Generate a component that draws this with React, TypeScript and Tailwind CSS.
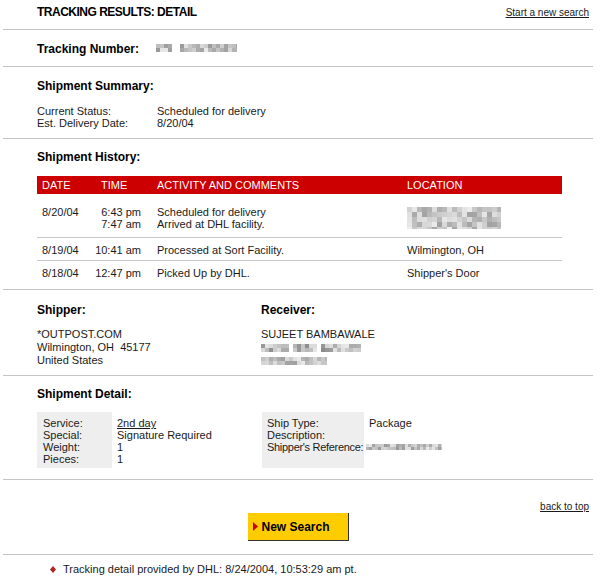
import React from "react";

function rng(seed: number) {
  let s = seed;
  return () => {
    s = (s * 9301 + 49297) % 233280;
    return s / 233280;
  };
}

function Blur({
  w,
  h,
  cell = 4,
  seed = 1,
  gaps = [],
  lo = 150,
  hi = 235,
}: {
  w: number;
  h: number;
  cell?: number;
  seed?: number;
  gaps?: [number, number][];
  lo?: number;
  hi?: number;
}) {
  const r = rng(seed);
  const rects: React.ReactNode[] = [];
  for (let y = 0; y < h; y += cell) {
    for (let x = 0; x < w; x += cell) {
      const v = Math.floor(lo + r() * (hi - lo));
      if (gaps.some(([a, b]) => x >= a && x < b)) continue;
      rects.push(
        <rect
          key={`${x}-${y}`}
          x={x}
          y={y}
          width={cell}
          height={cell}
          fill={`rgb(${v},${v},${v})`}
        />
      );
    }
  }
  return (
    <svg width={w} height={h} className="block">
      {rects}
    </svg>
  );
}

const sectionCls = "border-b border-[#c4c4c4] pl-[34px]";
const headCls = "text-[12px] leading-[14px] font-bold text-black";

export default function App() {
  return (
    <div className="w-[614px] min-h-[581px] bg-white font-['Liberation_Sans',Arial,sans-serif] text-[#1a1a1a]">
      <div className="ml-[3px] w-[590px]">
        {/* Header */}
        <div className={`${sectionCls} flex items-baseline justify-between pr-[4px] pt-[5px] pb-[10px]`}>
          <h1 className={`${headCls} tracking-[-0.5px]`}>TRACKING RESULTS: DETAIL</h1>
          <a href="#" className="text-[10px] leading-[12px] underline text-[#1a1a1a]">
            Start a new search
          </a>
        </div>

        {/* Tracking number */}
        <div className={`${sectionCls} flex items-start pt-[12px] pb-[10px]`}>
          <div className={`${headCls} w-[119px]`}>Tracking Number:</div>
          <div className="pt-[2px]">
            <Blur w={81} h={8} seed={7} gaps={[[16, 24]]} />
          </div>
        </div>

        {/* Summary */}
        <div className={`${sectionCls} pt-[12px] pb-[9px]`}>
          <div className={headCls}>Shipment Summary:</div>
          <div className="mt-[12px] grid grid-cols-[120px_1fr] text-[11px] leading-[12px]">
            <div>Current Status:</div>
            <div>Scheduled for delivery</div>
            <div>Est. Delivery Date:</div>
            <div>8/20/04</div>
          </div>
        </div>

        {/* History */}
        <div className={`${sectionCls} pt-[11px]`}>
          <div className={headCls}>Shipment History:</div>
          <div className="mt-[12px] w-[525px] text-[11px] leading-[12px]">
            <div className="grid h-[18px] grid-cols-[58px_62px_250px_1fr] bg-[#cc0000] leading-[18px] text-white">
              <div className="pl-[5px]">DATE</div>
              <div className="pl-[6px]">TIME</div>
              <div>ACTIVITY AND COMMENTS</div>
              <div>LOCATION</div>
            </div>
            <div className="grid grid-cols-[58px_62px_250px_1fr] border-b border-[#c8c8c8] pt-[12px] pb-[7px]">
              <div className="pl-[5px]">8/20/04</div>
              <div className="pr-[16px] text-right">
                <div>6:43 pm</div>
                <div>7:47 am</div>
              </div>
              <div>
                <div>Scheduled for delivery</div>
                <div>Arrived at DHL facility.</div>
              </div>
              <div className="pt-[1px]">
                <Blur w={94} h={22} cell={5} seed={11} lo={160} hi={240} />
              </div>
            </div>
            <div className="grid grid-cols-[58px_62px_250px_1fr] border-b border-[#c8c8c8] pt-[6px] pb-[4px]">
              <div className="pl-[5px]">8/19/04</div>
              <div className="pr-[16px] text-right">10:41 am</div>
              <div>Processed at Sort Facility.</div>
              <div>Wilmington, OH</div>
            </div>
            <div className="grid grid-cols-[58px_62px_250px_1fr] pt-[6px] pb-[10px]">
              <div className="pl-[5px]">8/18/04</div>
              <div className="pr-[16px] text-right">12:47 pm</div>
              <div>Picked Up by DHL.</div>
              <div>Shipper's Door</div>
            </div>
          </div>
        </div>

        {/* Shipper / Receiver */}
        <div className={`${sectionCls} grid grid-cols-[224px_1fr] pt-[13px] pb-[8px]`}>
          <div>
            <div className={headCls}>Shipper:</div>
            <div className="mt-[11px] text-[11px] leading-[13px]">
              <div>*OUTPOST.COM</div>
              <div>Wilmington, OH&nbsp; 45177</div>
              <div>United States</div>
            </div>
          </div>
          <div>
            <div className={headCls}>Receiver:</div>
            <div className="mt-[11px] text-[11px] leading-[13px]">
              <div>SUJEET BAMBAWALE</div>
              <div className="flex h-[13px] items-center">
                <Blur w={100} h={8} seed={23} gaps={[[28, 32], [56, 60]]} lo={140} hi={235} />
              </div>
              <div className="flex h-[13px] items-center">
                <Blur w={66} h={8} seed={31} lo={160} hi={235} />
              </div>
            </div>
          </div>
        </div>

        {/* Shipment detail */}
        <div className={`${sectionCls} pt-[11px] pb-[11px]`}>
          <div className={headCls}>Shipment Detail:</div>
          <div className="mt-[11px] flex text-[11px] leading-[12px]">
            <div className="w-[75px] bg-[#eeeeee] pl-[6px] pt-[5px] pb-[3px]">
              <div>Service:</div>
              <div>Special:</div>
              <div>Weight:</div>
              <div>Pieces:</div>
            </div>
            <div className="w-[150px] pl-[5px] pt-[5px] pb-[3px]">
              <div>
                <a href="#" className="underline">2nd day</a>
              </div>
              <div>Signature Required</div>
              <div>1</div>
              <div>1</div>
            </div>
            <div className="w-[102px] bg-[#eeeeee] pl-[5px] pt-[5px] pb-[3px] whitespace-nowrap">
              <div>Ship Type:</div>
              <div>Description:</div>
              <div className="tracking-[-0.3px]">Shipper's Reference:</div>
            </div>
            <div className="pl-[2px] pt-[5px] pb-[3px]">
              <div className="pl-[3px]">Package</div>
              <div>&nbsp;</div>
              <div className="flex h-[12px] items-center">
                <Blur w={76} h={6} cell={3} seed={41} lo={150} hi={235} />
              </div>
            </div>
          </div>
        </div>

        {/* Back to top + button */}
        <div className="border-b border-[#c4c4c4] pt-[21px] pb-[13px]">
          <div className="pr-[4px] text-right text-[10px] leading-[12px]">
            <a href="#" className="underline">back to top</a>
          </div>
          <div className="flex justify-center">
            <button className="flex h-[28px] w-[101px] items-center border-r border-b border-[#333333] bg-[#ffcc00] pl-[5px]">
              <svg width="5" height="9" viewBox="0 0 5 9" className="block">
                <polygon points="0,0 5,4.5 0,9" fill="#cc0000" />
              </svg>
              <span className="ml-[4px] text-[12px] font-bold text-black">New Search</span>
            </button>
          </div>
        </div>

        {/* Footer */}
        <div className="flex items-center pl-[47px] pt-[8px] text-[11px] leading-[12px]">
          <svg width="6" height="7" viewBox="0 0 6 7" className="block">
            <polygon points="3,0 6,3.5 3,7 0,3.5" fill="#b22222" />
          </svg>
          <span className="ml-[7px]">Tracking detail provided by DHL: 8/24/2004, 10:53:29 am pt.</span>
        </div>
      </div>
    </div>
  );
}
